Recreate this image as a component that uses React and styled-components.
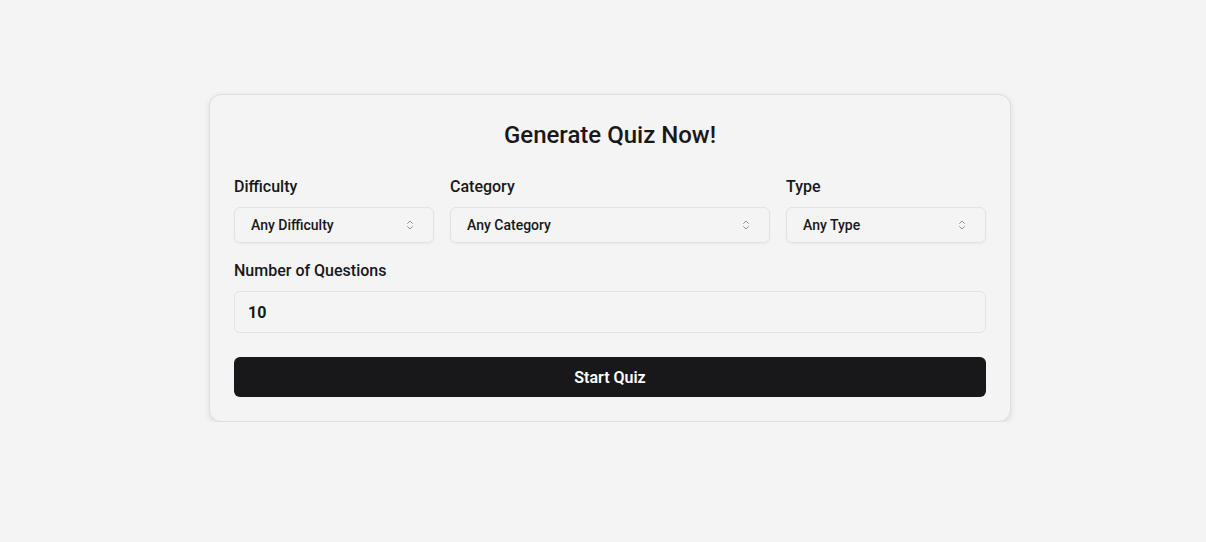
import React from 'react';
import styled, { createGlobalStyle } from 'styled-components';

const GlobalStyle = createGlobalStyle`
  html, body {
    margin: 0;
    background: #f4f4f4;
    font-family: Roboto, "Liberation Sans", sans-serif;
    color: #18181b;
  }
`;

const Page = styled.div`
  display: flex;
  justify-content: center;
  padding: 94px 0 0 14px;
`;

const Card = styled.form`
  width: 802px;
  box-sizing: border-box;
  padding: 24px;
  background: #f4f4f4;
  border: 1px solid #dedede;
  border-radius: 12px;
  box-shadow: 0 2px 6px rgba(0, 0, 0, 0.1);
`;

const Title = styled.h1`
  margin: 0 0 24px;
  font-size: 24px;
  line-height: 32px;
  font-weight: 500;
  text-align: center;
`;

const Row = styled.div`
  display: grid;
  grid-template-columns: 5fr 8fr 5fr;
  gap: 16px;
  margin-bottom: 16px;
`;

const Field = styled.label`
  display: flex;
  flex-direction: column;
  gap: 8px;
`;

const Label = styled.span`
  font-size: 16px;
  line-height: 24px;
  font-weight: 500;
`;

const SelectBox = styled.div`
  height: 36px;
  box-sizing: border-box;
  display: flex;
  align-items: center;
  justify-content: space-between;
  padding: 0 17px 0 16px;
  border: 1px solid #e3e3e3;
  border-radius: 6px;
  background: #f4f4f4;
  box-shadow: 0 1px 2px rgba(0, 0, 0, 0.05);
  font-size: 14px;
  font-weight: 500;
`;

const NumberInput = styled.div`
  height: 42px;
  box-sizing: border-box;
  display: flex;
  align-items: center;
  padding: 0 13px;
  border: 1px solid #e3e3e3;
  border-radius: 6px;
  background: #f4f4f4;
  font-size: 16px;
  font-weight: 700;
`;

const Button = styled.button`
  width: 100%;
  height: 40px;
  margin-top: 24px;
  border: none;
  border-radius: 6px;
  background: #18181b;
  color: #fff;
  font-family: inherit;
  font-size: 16px;
  font-weight: 600;
`;

const UpDown = () => (
  <svg width="12" height="12" viewBox="0 0 24 24" fill="none" stroke="#888" strokeWidth="1.8" strokeLinecap="round" strokeLinejoin="round">
    <path d="m7 15 5 5 5-5" />
    <path d="m7 9 5-5 5 5" />
  </svg>
);

const Select = ({ label, value }) => (
  <Field>
    <Label>{label}</Label>
    <SelectBox>
      {value}
      <UpDown />
    </SelectBox>
  </Field>
);

export default function App() {
  return (
    <>
      <GlobalStyle />
      <Page>
        <Card onSubmit={(e) => e.preventDefault()}>
          <Title>Generate Quiz Now!</Title>
          <Row>
            <Select label="Difficulty" value="Any Difficulty" />
            <Select label="Category" value="Any Category" />
            <Select label="Type" value="Any Type" />
          </Row>
          <Field>
            <Label>Number of Questions</Label>
            <NumberInput>10</NumberInput>
          </Field>
          <Button type="submit">Start Quiz</Button>
        </Card>
      </Page>
    </>
  );
}
